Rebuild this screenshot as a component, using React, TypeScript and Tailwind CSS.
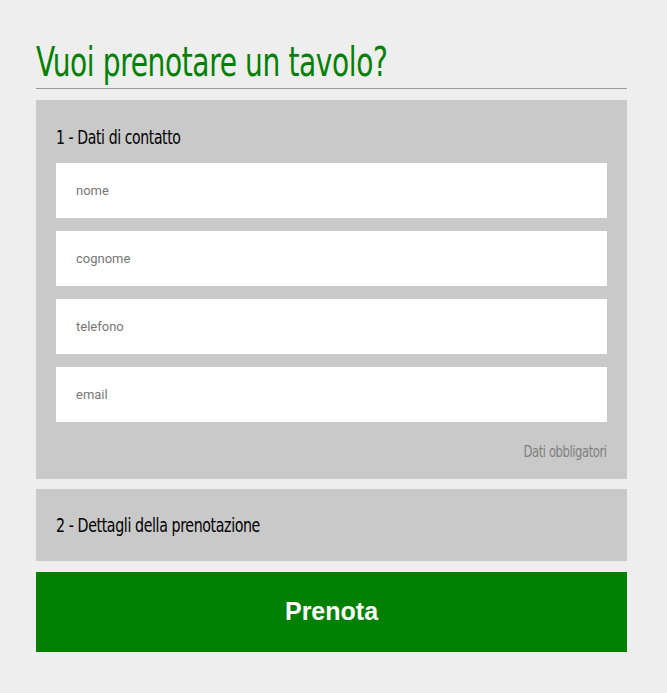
import React from 'react';

// condensed heading face, narrowed further to match the original webfont
const condensed = "font-['DejaVu_Sans_Condensed','DejaVu_Sans',sans-serif] [font-stretch:condensed] tracking-[-0.5px]";

const fields = ['nome', 'cognome', 'telefono', 'email'];

export default function App() {
  return (
    <div className="min-h-[693px] bg-[#eeeeee] pl-9 pr-10 pt-[38px] pb-10">
      <div className="border-b border-[#999999] pb-[2px]">
        <h1 className={`${condensed} inline-block origin-left scale-x-[0.78] whitespace-nowrap text-[40px] leading-[48px] text-[#008000]`}>
          Vuoi prenotare un tavolo?
        </h1>
      </div>

      <form className="mt-[11px] flex flex-col gap-[10px]">
        {/* Step 1 */}
        <div className="bg-[#c9c9c9] px-5 pt-[25px] pb-[17px]">
          <h2 className={`${condensed} inline-block origin-left scale-x-[0.78] whitespace-nowrap text-[20px] leading-6 text-black`}>
            1 - Dati di contatto
          </h2>
          <div className="mt-[13px] flex flex-col gap-[13px]">
            {fields.map((f) => (
              <input
                key={f}
                type="text"
                placeholder={f}
                className="h-[55px] w-full bg-white px-5 font-['Roboto',sans-serif] text-[13px] text-black placeholder:text-[#777777] outline-none"
              />
            ))}
          </div>
          <div className="mt-5 flex justify-end">
            <p className={`${condensed} origin-right scale-x-[0.86] whitespace-nowrap text-[15px] leading-5 text-[#808080]`}>
              Dati obbligatori
            </p>
          </div>
        </div>

        {/* Step 2 */}
        <div className="bg-[#c9c9c9] px-5 h-[72px] flex items-center">
          <h2 className={`${condensed} origin-left scale-x-[0.79] whitespace-nowrap text-[20px] leading-6 text-black`}>
            2 - Dettagli della prenotazione
          </h2>
        </div>

        <button
          type="button"
          className="mt-px h-20 w-full bg-[#008000] font-['Liberation_Sans',Arial,sans-serif] text-[25px] font-bold text-white"
        >
          Prenota
        </button>
      </form>
    </div>
  );
}
